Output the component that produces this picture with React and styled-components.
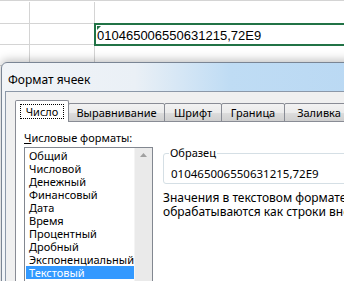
import styled, { createGlobalStyle } from 'styled-components';

const GlobalStyle = createGlobalStyle`
  html, body {
    margin: 0;
    padding: 0;
    width: 344px;
    height: 281px;
    overflow: hidden;
    background: #fff;
  }
`;

const formats = [
  'Общий',
  'Числовой',
  'Денежный',
  'Финансовый',
  'Дата',
  'Время',
  'Процентный',
  'Дробный',
  'Экспоненциальный',
  'Текстовый',
];

const tabs = [
  { label: 'Число', width: 54 },
  { label: 'Выравнивание', width: 97 },
  { label: 'Шрифт', width: 58 },
  { label: 'Граница', width: 64 },
  { label: 'Заливка', width: 70 },
];

export default function App() {
  return (
    <Page>
      <GlobalStyle />
      <Sheet>
        <SheetRow height={21}>
          <Cell width={29} />
          <Cell width={64} />
          <Cell width={260} />
        </SheetRow>
        <SheetRow height={20}>
          <Cell width={29} />
          <Cell width={64} />
          <ActiveCell width={260}>
            <GreenMark />
            010465006550631215,72E9
          </ActiveCell>
        </SheetRow>
        <SheetRow height={20}>
          <Cell width={29} />
          <Cell width={64} />
          <Cell width={260} />
        </SheetRow>
      </Sheet>

      <Window>
        <TitleBar>Формат ячеек</TitleBar>
        <Client>
          <TabStrip>
            {tabs.map((t, i) => (
              <Tab key={t.label} active={i === 0} width={t.width}>
                {i === 0 ? <Focus>{t.label}</Focus> : t.label}
              </Tab>
            ))}
          </TabStrip>
          <Panel>
            <LeftCol>
              <Label>
                <u>Ч</u>исловые форматы:
              </Label>
              <ListBox>
                <Items>
                  {formats.map((f) => (
                    <Item key={f} selected={f === 'Текстовый'}>
                      {f}
                    </Item>
                  ))}
                </Items>
                <ScrollBar>
                  <svg width="7" height="4" viewBox="0 0 7 4">
                    <path d="M0 4 L3.5 0 L7 4 Z" fill="#a0a0a0" />
                  </svg>
                </ScrollBar>
              </ListBox>
            </LeftCol>
            <RightCol>
              <GroupBox>
                <GroupLegend>Образец</GroupLegend>
                <SampleValue>010465006550631215,72E9</SampleValue>
              </GroupBox>
              <Description>
                <div>Значения в текстовом формате ячеек</div>
                <div>обрабатываются как строки вне зависимости от</div>
              </Description>
            </RightCol>
          </Panel>
        </Client>
      </Window>
    </Page>
  );
}

const Page = styled.div`
  position: relative;
  width: 344px;
  height: 281px;
  overflow: hidden;
  background: #fff;
`;

const Sheet = styled.div`
  display: flex;
  flex-direction: column;
  padding-top: 1px;
  border-top: 1px solid #d4d4d4;
`;

const SheetRow = styled.div`
  display: flex;
  height: ${(p) => p.height}px;
  border-bottom: 1px solid #d4d4d4;
`;

const Cell = styled.div`
  flex: 0 0 ${(p) => p.width}px;
  border-right: 1px solid #d4d4d4;
`;

const ActiveCell = styled(Cell)`
  position: relative;
  box-sizing: border-box;
  margin: -1px 0 -2px -1px;
  height: 23px;
  border: 2px solid #217346;
  padding: 3px 0 0 1px;
  font-family: 'Liberation Sans', Arial, sans-serif;
  font-size: 13px;
  line-height: 15px;
  color: #000;
  white-space: nowrap;
`;

const GreenMark = styled.span`
  position: absolute;
  left: 1px;
  top: 1px;
  width: 0;
  height: 0;
  border-top: 4px solid #217346;
  border-right: 4px solid transparent;
`;

const Window = styled.div`
  position: absolute;
  left: 1px;
  top: 62px;
  width: 380px;
  height: 240px;
  border-radius: 6px 6px 0 0;
  border: 1px solid #7a8594;
  background: linear-gradient(to right, #f1f4f7 0%, #eaf0f6 35%, #bfdcf4 60%, #b9d8f3 100%);
  box-shadow: 0 -2px 10px rgba(0, 0, 0, 0.25);
  font-family: 'Noto Sans', 'Open Sans', sans-serif;
  color: #000;
`;

const TitleBar = styled.div`
  box-sizing: border-box;
  height: 28px;
  display: flex;
  align-items: center;
  padding: 4px 0 0 6px;
  font-size: 12px;
`;

const Client = styled.div`
  margin-left: 3px;
  height: 220px;
  background: #f0f0f0;
  border-top: 1px solid #8c98a8;
  border-left: 1px solid #8c98a8;
  padding: 8px 0 0 9px;
  font-size: 11px;
`;

const TabStrip = styled.div`
  display: flex;
  align-items: flex-end;
  height: 22px;
  position: relative;
  z-index: 1;
`;

const Tab = styled.div`
  box-sizing: border-box;
  width: ${(p) => p.width}px;
  height: ${(p) => (p.active ? 22 : 19)}px;
  display: flex;
  align-items: center;
  justify-content: center;
  white-space: nowrap;
  border: 1px solid #898c95;
  border-bottom: ${(p) => (p.active ? 'none' : '1px solid #898c95')};
  margin-left: ${(p) => (p.active ? 0 : -1)}px;
  background: ${(p) =>
    p.active ? '#fff' : 'linear-gradient(#f2f2f2 0%, #ebebeb 50%, #dddddd 51%, #cfcfcf 100%)'};
  border-radius: 2px 2px 0 0;
`;

const Focus = styled.span`
  border: 1px dotted #000;
  padding: 0 5px;
  line-height: 13px;
`;

const Panel = styled.div`
  background: #fff;
  border: 1px solid #898c95;
  margin-top: -1px;
  height: 200px;
  display: flex;
  gap: 10px;
  padding: 8px 0 0 8px;
`;

const LeftCol = styled.div`
  display: flex;
  flex-direction: column;
  width: 138px;
`;

const Label = styled.div`
  line-height: 15px;
  height: 17px;
`;

const ListBox = styled.div`
  display: flex;
  border: 1px solid #828790;
  height: 160px;
  background: #fff;
`;

const Items = styled.div`
  flex: 1;
  padding: 1px 0 0 1px;
`;

const Item = styled.div`
  height: 13px;
  line-height: 13px;
  padding-left: 3px;
  white-space: nowrap;
  background: ${(p) => (p.selected ? '#3399ff' : 'transparent')};
  color: ${(p) => (p.selected ? '#fff' : '#000')};
`;

const ScrollBar = styled.div`
  width: 17px;
  background: #eaeaea;
  border-left: 1px solid #f4f4f4;
  display: flex;
  justify-content: center;
  padding-top: 5px;
`;

const RightCol = styled.div`
  display: flex;
  flex-direction: column;
  padding-top: 23px;
  flex: 1;
`;

const GroupBox = styled.div`
  position: relative;
  height: 31px;
  border: 1px solid #d5dfe5;
  border-radius: 3px;
  box-sizing: border-box;
  padding: 13px 0 0 7px;
`;

const GroupLegend = styled.span`
  position: absolute;
  left: 5px;
  top: -8px;
  padding: 0 1px;
  background: #fff;
  line-height: 14px;
`;

const SampleValue = styled.div`
  font-size: 11.5px;
  line-height: 14px;
  white-space: nowrap;
`;

const Description = styled.div`
  margin-top: 7px;
  font-size: 12px;
  line-height: 14px;
  white-space: nowrap;
`;
